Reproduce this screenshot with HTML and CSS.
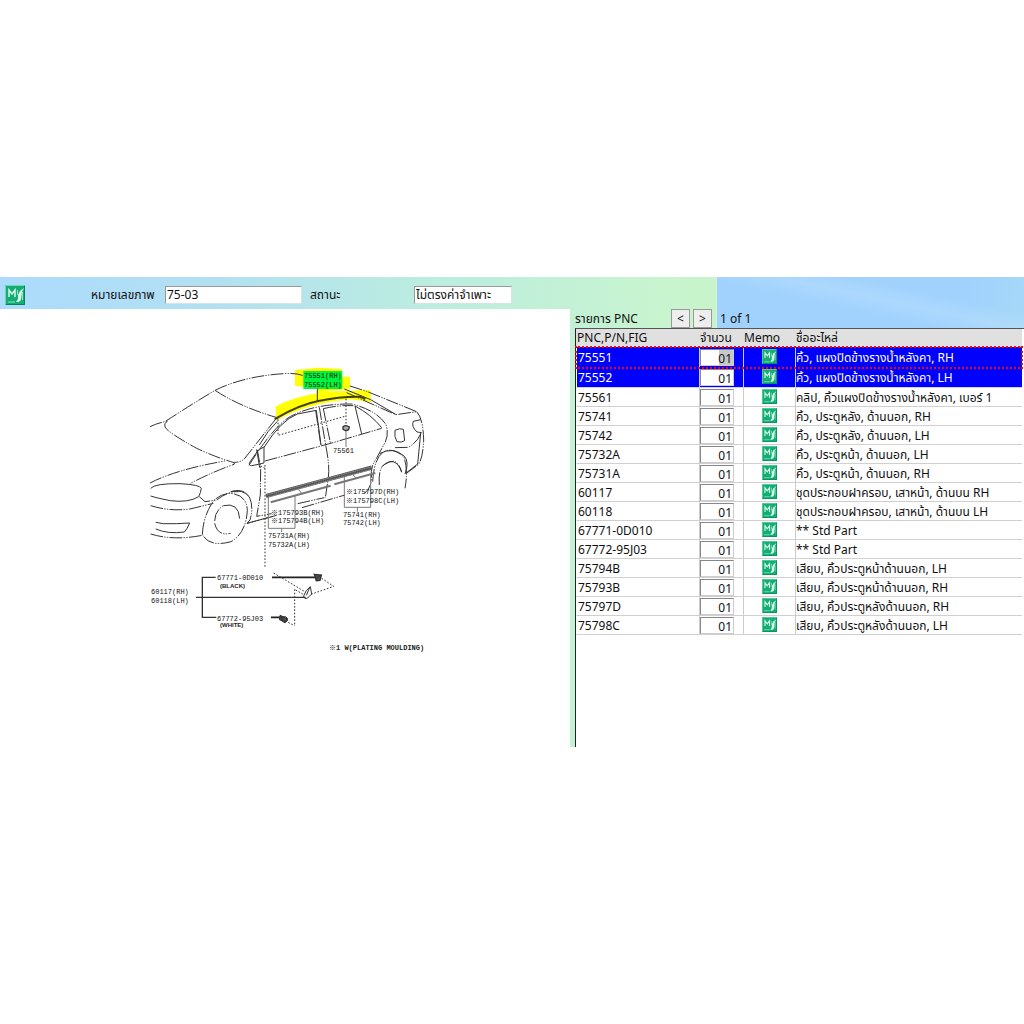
FILE: index.html
```html
<!DOCTYPE html>
<html lang="th">
<head>
<meta charset="utf-8">
<meta name="viewport" content="width=device-width, initial-scale=1">
<title>75-03</title>
<link rel="stylesheet" href="styles.css">
</head>
<body>
<svg class="defs" width="0" height="0" aria-hidden="true">
  <symbol id="memo" viewBox="0 0 20 20">
    <rect width="20" height="20" fill="#12ae74"/>
    <path d="M0.500 19.500V0.500H19.500" fill="none" stroke="#74d6ae"/>
    <path d="M19.500 1V19.500H1" fill="none" stroke="#078757"/>
    <path d="M4 12V5L7 9L10 5V12" fill="none" stroke="#d8f8ea" stroke-width="1.500"/>
    <path d="M19 3L15 6L13 10V14L11 17H14L16 15L17 7Z" fill="#d8f8ea"/>
    <path d="M12.500 5V10M3 17H10M17.500 7V15" fill="none" stroke="#8fe2c0"/>
  </symbol>
</svg>
<main class="app">
  <header class="toolbar">
    <button class="memo memo-large" type="button" aria-label="Memo"><svg><use href="#memo"/></svg></button>
    <label class="figure-label" for="figure">หมายเลขภาพ</label>
    <input class="field figure" id="figure" value="75-03">
    <label class="status-label" for="status">สถานะ</label>
    <input class="field status" id="status" value="ไม่ตรงค่าจำเพาะ">
  </header>
  <div class="workspace">
    <section class="drawing">
      <svg viewBox="0 309 570 438" role="img" aria-label="75-03">
        <g transform="translate(150 360) scale(.33333)" class="line">
          <path class="marker" d="M435 30L505 23L576 27V50H600V86L515 95L660 90L664 126L600 118Q470 130 380 181L376 140Q430 111 502 100V84L435 78Z"/>
          <rect class="label-mark" x="460" y="33" width="117" height="54"/>
          <g class="phantom">
            <path d="M48 183Q120 136 195 91Q280 49 400 41Q438 38 460 47"/>
            <path d="M0 200Q25 188 54 183Q40 189 45 201Q53 217 140 265Q200 293 253 308Q257 313 244 316Q180 339 120 371M195 91Q270 140 378 172M0 369Q80 328 225 303M378 176L282 298Q270 307 253 307"/>
            <path d="M2 437Q60 455 120 447L190 430M148 410L165 425L200 420Q235 393 265 395M2 522Q70 543 157 526"/>
            <path d="M157 523Q160 465 192 421Q213 401 240 400Q290 403 292 451Q288 520 243 545Q177 563 157 523M246 394Q283 385 298 411Q312 440 300 480L291 490L365 470"/>
            <path d="M194 483Q195 452 220 437M194 490Q203 529 242 520"/>
            <path d="M322 270L332 325L331 405L320 469L365 461M345 303L535 252L695 205M297 316Q371 198 422 169Q493 131 606 132Q682 152 708 194Q717 221 706 246L679 296Q659 323 665 355Q662 388 643 400"/>
            <path d="M497 151L513 258M508 142L527 255Q540 320 535 352L526 414M520 146L541 248M520 146Q565 135 610 137"/>
            <path d="M600 78L650 94L800 155L737 164L590 98M800 155Q819 173 821 240Q819 292 806 313L768 341M735 263L775 262Q803 246 813 219M291 490L380 466M456 443L585 405M443 431L523 413"/>
            <path d="M668 365Q672 295 700 276Q730 259 762 292Q775 330 765 385M688 375Q684 326 704 313Q740 286 755 335"/>
          </g>
          <path d="M2 385Q15 370 90 371Q150 374 154 385Q152 398 146 410Q115 429 61 422Q20 414 2 408M17 487L40 491Q80 492 119 489Q112 507 103 516Q55 523 17 507"/>
          <path d="M220 437Q266 426 269 476M242 395Q280 387 298 411M305 317Q295 317 299 307L325 270L342 261V309L325 313ZM320 268L329 323M382 184Q353 211 328 255M342 262Q393 181 442 162L499 151L513 255"/>
          <path d="M615 138L635 222M615 138Q663 163 695 203M735 211Q750 203 760 208L764 242Q754 249 741 245Q732 232 735 211ZM812 179L790 184Q783 199 801 216L815 218M688 281Q730 259 762 288Q779 303 765 342M695 320Q737 283 755 337M812 219L803 312L767 340"/>
          <path d="M583 87L662 119L737 163M502 86V123"/>
          <path class="roof" d="M378 175Q448 134 505 123Q570 109 630 110L646 117M374 177L385 173"/>
          <path class="moulding" d="M348 408L538 357L665 323"/>
          <path class="grain" d="M350 405L538 354L665 320M355 411L538 361L663 329"/>
          <path class="insert" d="M362 427L542 377M553 373L676 339"/>
          <path class="dots" d="M384 178V226L588 168M588 116V202M345 315V625M332 318L345 325"/>
          <path class="leader" d="M355 410V505H435M435 406V505M395 505V516M583 350V442H662V342M622 442V455M588 211V261M445 388L455 400M608 344L620 355"/>
          <path class="clip" d="M579 200Q588 193 598 201L596 209Q586 215 579 208Z"/>
        </g>
        <g transform="translate(145 550) scale(.33333)" class="line">
          <path class="leader dark" d="M153 142H482M212 82H172V202H214"/>
          <path class="black" d="M381 82H510M378 202H405"/>
          <path class="dots" d="M386 69L478 124M530 85L566 109L495 134M449 118V227M403 204L449 227M452 120L478 135"/>
          <path class="part" d="M508 73L529 75L525 91L514 92ZM406 197L427 207L420 217L404 208Z"/>
          <path d="M476 138Q482 119 496 110L500 132L488 144Q477 149 476 138ZM494 113L484 136M507 74L520 93M530 75L511 86M404 198L420 215M412 202Q425 194 428 211Q418 222 411 211Z"/>
        </g>
        <g class="part-number">
          <text x="304" y="378">75551(RH)</text><text x="304" y="387">75552(LH)</text>
          <text x="333" y="453">75561</text>
          <text x="346" y="494">※175797D(RH)</text>
          <text x="346" y="503">※175798C(LH)</text>
          <text x="343" y="517">75741(RH)</text><text x="343" y="525">75742(LH)</text>
          <text x="271" y="515">※175793B(RH)</text>
          <text x="271" y="523">※175794B(LH)</text>
          <text x="268" y="538">75731A(RH)</text><text x="268" y="547">75732A(LH)</text>
          <text x="151" y="594">60117(RH)</text><text x="151" y="603">60118(LH)</text>
        </g>
        <g class="variant">
          <text x="217" y="580">67771-0D010</text><text x="217" y="621">67772-95J03</text>
        </g>
        <g class="color-name"><text x="220" y="588">(BLACK)</text><text x="220" y="627">(WHITE)</text></g>
        <text class="note" x="329" y="650">※1 W(PLATING MOULDING)</text>
      </svg>
    </section>
    <section class="parts">
      <div class="pager">
        <h1>รายการ PNC</h1>
        <button type="button" aria-label="Previous">&lt;</button>
        <button type="button" aria-label="Next">&gt;</button>
        <span>1 of 1</span>
      </div>
      <div class="grid">
        <table>
          <colgroup><col class="col-code"><col class="col-qty"><col class="col-memo"><col></colgroup>
          <thead><tr><th>PNC,P/N,FIG</th><th>จำนวน</th><th>Memo</th><th>ชื่ออะไหล่</th></tr></thead>
          <tbody id="rows"></tbody>
        </table>
      </div>
    </section>
  </div>
</main>
<script src="parts.js"></script>
</body>
</html>
```
FILE: styles.css
```css
* { box-sizing: border-box; }
body {
  margin: 0;
  min-height: 100vh;
  display: grid;
  align-content: center;
  background: #fff;
  color: #111;
  font: 12px/18px "Noto Sans", "Noto Sans Thai", "DejaVu Sans", sans-serif;
}
button, input { font: inherit; color: inherit; }
.defs { position: absolute; }
.app {
  background:
    linear-gradient(90deg, #acdbfd 0, #b2e0f2 30%, #b9ebe2 55%, #c8f4cf 92%, #c8f4ca 100%) left / 70% 100% no-repeat,
    linear-gradient(12deg, transparent 40%, #ffffff22 55%, transparent 70%) right top / 30% 52px no-repeat,
    linear-gradient(100deg, #a0d2fd 65%, #acdff0) right / 30% 100% no-repeat;
}
.toolbar { display: flex; align-items: center; height: 32px; padding: 3px 5px 0; }
.memo { display: block; width: 15px; height: 15px; padding: 0; border: 0; background: none; }
.memo svg { display: block; width: 100%; height: 100%; }
.memo-large { width: 20px; height: 20px; margin-right: 66px; }
.figure-label { width: 74px; }
.field {
  height: 18px;
  padding: 0 1px;
  border: 1px solid #d4e4e4;
  border-top-color: #999;
  border-left-color: #999;
  background: #fff;
}
.figure { width: 137px; }
.status-label { width: 112px; padding-left: 8px; }
.status { width: 98px; }
.workspace { display: grid; grid-template-columns: minmax(0, 570fr) minmax(0, 454fr); }
.drawing { background: #fff; }
.drawing svg { display: block; width: 100%; }
.line path { fill: none; stroke: #333; stroke-width: 3; }
.line .phantom path { stroke-dasharray: 38 4 4 4 4 4; }
.line .marker { fill: #ff0; stroke: none; }
.line .label-mark { fill: #00f53d; }
.line .roof { stroke: #443f00; stroke-width: 6; }
.line .moulding { stroke: #555; stroke-width: 13; }
.line .grain { stroke: #aaa; stroke-width: 2; stroke-dasharray: 5 2; }
.line .insert { stroke: #777; stroke-width: 6; }
.line .dots { stroke-dasharray: 5 5; }
.line .leader { stroke: #777; }
.line .dark { stroke: #333; stroke-width: 4; }
.line .black { stroke: #222; stroke-width: 5; }
.line .clip { fill: #aaa; stroke-width: 4; }
.line .part { fill: #555; stroke-width: 4; }
.part-number, .variant { font: 7px "Liberation Mono", "Noto Sans CJK JP", monospace; fill: #111; }
.color-name { font: bold 6px "Liberation Sans", sans-serif; fill: #222; }
.note { font: bold 7px "Liberation Mono", "Noto Sans CJK JP", monospace; fill: #222; }
.parts { display: flex; flex-direction: column; padding-left: 5px; }
.pager { display: flex; align-items: center; height: 19px; gap: 3px; }
.pager h1 { width: 93px; margin: 0; font: inherit; }
.pager button {
  width: 19px;
  height: 19px;
  padding: 0;
  border: 1px solid #999;
  background: #eee;
  line-height: 16px;
}
.pager span { padding-left: 5px; }
.grid { flex: 1; border-top: 1px solid #555; border-left: 1px solid #222; background: #fff; padding-right: 2px; }
table { width: 100%; table-layout: fixed; border-spacing: 0; }
.col-code { width: 123px; }
.col-qty { width: 44px; }
.col-memo { width: 52px; }
th, td { padding: 0; border-bottom: 1px solid #d0d0d0; border-left: 1px solid #ccc; line-height: 17px; white-space: nowrap; }
th { height: 18px; border-color: #e0e0e0; background: #e0e0e0; font-weight: 400; text-align: left; }
td { height: 19px; }
td:first-child { padding-left: 1px; border-left-color: #fff; }
.selected td { height: 20px; border-bottom-color: #d0d0ff; background: #00f; color: #fff; }
.active td { height: 21px; border-bottom-color: #00f; }
.active { position: relative; z-index: 1; outline: 2px dotted #f00; outline-offset: -1px; }
.qty {
  display: block;
  width: 34px;
  height: 17px;
  padding: 2px 1px 0 0;
  border: 1px solid #ccc;
  border-top-color: #888;
  border-left-color: #888;
  background: #fff;
  color: #111;
  text-align: right;
}
.selected .qty { color: #111; }
.active .qty { background: linear-gradient(90deg, #fff 18px, #c8c8c8 18px); }
td .memo { margin: 0 0 2px 18px; }
```
FILE: parts.js
```js
const parts = [
  ["75551", "คิ้ว, แผงปิดข้างรางน้ำหลังคา, RH"],
  ["75552", "คิ้ว, แผงปิดข้างรางน้ำหลังคา, LH"],
  ["75561", "คลิป, คิ้วแผงปิดข้างรางน้ำหลังคา, เบอร์ 1"],
  ["75741", "คิ้ว, ประตูหลัง, ด้านนอก, RH"],
  ["75742", "คิ้ว, ประตูหลัง, ด้านนอก, LH"],
  ["75732A", "คิ้ว, ประตูหน้า, ด้านนอก, LH"],
  ["75731A", "คิ้ว, ประตูหน้า, ด้านนอก, RH"],
  ["60117", "ชุดประกอบฝาครอบ, เสาหน้า, ด้านบน RH"],
  ["60118", "ชุดประกอบฝาครอบ, เสาหน้า, ด้านบน LH"],
  ["67771-0D010", "** Std Part"],
  ["67772-95J03", "** Std Part"],
  ["75794B", "เสียบ, คิ้วประตูหน้าด้านนอก, LH"],
  ["75793B", "เสียบ, คิ้วประตูหน้าด้านนอก, RH"],
  ["75797D", "เสียบ, คิ้วประตูหลังด้านนอก, RH"],
  ["75798C", "เสียบ, คิ้วประตูหลังด้านนอก, LH"]
];
document.getElementById("rows").innerHTML = parts.map(([code, name], i) => `
  <tr class="${i < 2 ? "selected" : ""} ${i === 0 ? "active" : ""}">
    <td>${code}</td>
    <td><input class="qty" value="01" aria-label="จำนวน ${code}"></td>
    <td><button class="memo" type="button" aria-label="Memo ${code}"><svg><use href="#memo"/></svg></button></td>
    <td>${name}</td>
  </tr>`).join("");
```
